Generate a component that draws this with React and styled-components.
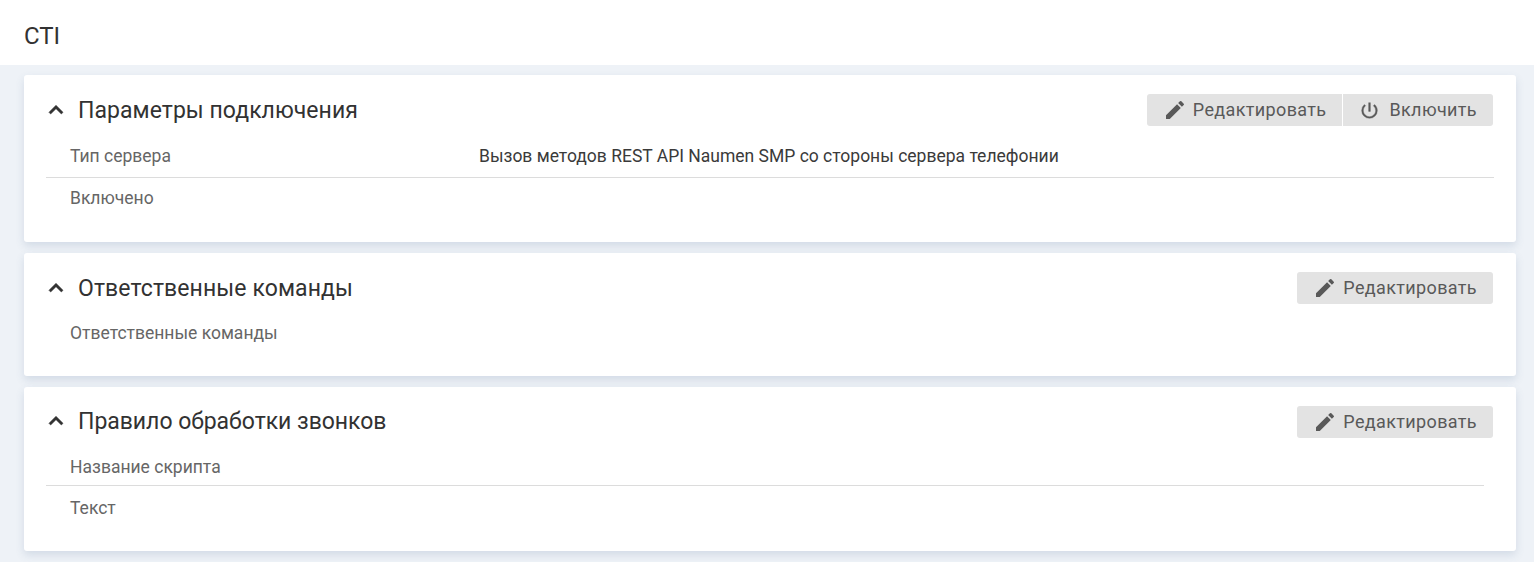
import React from "react";
import styled, { createGlobalStyle } from "styled-components";

const Global = createGlobalStyle`
  html, body { margin: 0; padding: 0; background: #eef2f7; }
  body { font-family: Roboto, "Noto Sans", sans-serif; height: 562px; overflow: hidden; }
`;
const Header = styled.header`
  height: 65px; box-sizing: border-box; background: #fff; padding: 6px 24px 0; display: flex; align-items: center;
  font-size: 24px; color: #323232;
`;
const Content = styled.main`
  padding: 10px 18px 0 24px; display: flex; flex-direction: column; gap: 11px;
`;
const Card = styled.section`
  background: #fff; border-radius: 3px; height: ${p => p.$h}px; box-sizing: border-box;
  padding: 19px 23px 0 22px; box-shadow: 0 4px 8px rgba(68, 98, 140, 0.16);
`;
const CardHead = styled.div`
  display: flex; align-items: center; height: 32px; margin-bottom: ${p => p.$mb}px;
`;
const TitleGroup = styled.div`
  display: flex; align-items: center; flex: 1; margin-bottom: ${p => p.$lift || 0}px;
`;
const Chevron = styled.svg`
  width: 28px; height: 28px; fill: #323232; stroke: #323232; stroke-width: 0.5; margin: 0 8px 0 -4px; flex: none;
`;
const CardTitle = styled.h2`
  margin: 0; font-size: 23px; font-weight: 400; color: #323232; letter-spacing: ${p => p.$ls}px;
`;
const BtnGroup = styled.div`
  display: flex; gap: 1px;
`;
const Btn = styled.button`
  all: unset; height: 32.5px; box-sizing: border-box; display: flex; align-items: center; gap: 6px;
  background: #e3e3e3; padding: 0 16px; font-size: 18px; font-weight: 400;
  color: #595959; letter-spacing: 0.36px; font-family: inherit;
  &:first-child { border-radius: 3px 0 0 3px; }
  &:last-child { border-radius: 0 3px 3px 0; }
  &:only-child { border-radius: 3px; }
`;
const BtnLabel = styled.span`
  padding-bottom: 2px;
`;
const BtnIcon = styled.svg`
  width: 24px; height: 24px; fill: #595959; flex: none;
`;
const PowerIcon = styled(BtnIcon)`
  width: 21px; height: 21px; margin: 0 3px 0 0; stroke: #595959; stroke-width: 0.4;
`;
const Row = styled.div`
  display: flex; align-items: center; height: ${p => p.$h || 41}px;
  padding: ${p => p.$pt || 0}px 0 ${p => p.$pb ?? 2}px 24px;
  margin-right: ${p => p.$mr ?? -1}px;
  font-size: 17.5px; color: #3a3a3a; box-sizing: border-box;
  border-bottom: ${p => (p.$line ? "1px solid #dcdcdc" : "none")};
`;
const Label = styled.div`
  width: 409px; flex: none; color: #666;
`;

const Up = () => <Chevron viewBox="0 0 24 24"><path d="M12 8l-6 6 1.41 1.41L12 10.83l4.59 4.58L18 14z" /></Chevron>;
const Pencil = () => <BtnIcon viewBox="0 0 24 24"><path d="M3 17.25V21h3.75L17.81 9.94l-3.75-3.75L3 17.25zM20.71 7.04a1 1 0 0 0 0-1.41l-2.34-2.34a1 1 0 0 0-1.41 0l-1.83 1.83 3.75 3.75 1.83-1.83z" /></BtnIcon>;
const Power = () => <PowerIcon viewBox="0 0 24 24"><path d="M13 3h-2v10h2V3zm4.83 2.17l-1.42 1.42A6.92 6.92 0 0 1 19 12c0 3.87-3.13 7-7 7s-7-3.13-7-7c0-2.17.99-4.1 2.58-5.42L6.17 5.17A8.932 8.932 0 0 0 3 12a9 9 0 0 0 18 0c0-2.74-1.23-5.19-3.17-6.83z" /></PowerIcon>;

export default function App() {
  return (
    <>
      <Global />
      <Header>CTI</Header>
      <Content>
        <Card $h={167}>
          <CardHead $mb={11}>
            <TitleGroup><Up /><CardTitle $ls={0.05}>Параметры подключения</CardTitle></TitleGroup>
            <BtnGroup>
              <Btn><Pencil /><BtnLabel>Редактировать</BtnLabel></Btn>
              <Btn><Power /><BtnLabel>Включить</BtnLabel></Btn>
            </BtnGroup>
          </CardHead>
          <Row $line><Label>Тип сервера</Label>Вызов методов REST API Naumen SMP со стороны сервера телефонии</Row>
          <Row><Label>Включено</Label></Row>
        </Card>
        <Card $h={123}>
          <CardHead $mb={9}>
            <TitleGroup><Up /><CardTitle $ls={0.1}>Ответственные команды</CardTitle></TitleGroup>
            <BtnGroup><Btn><Pencil /><BtnLabel>Редактировать</BtnLabel></Btn></BtnGroup>
          </CardHead>
          <Row><Label>Ответственные команды</Label></Row>
        </Card>
        <Card $h={164}>
          <CardHead $mb={9}>
            <TitleGroup $lift={2}><Up /><CardTitle $ls={-0.03}>Правило обработки звонков</CardTitle></TitleGroup>
            <BtnGroup><Btn><Pencil /><BtnLabel>Редактировать</BtnLabel></Btn></BtnGroup>
          </CardHead>
          <Row $line $mr={9} $h={39} $pt={2} $pb={0}><Label>Название скрипта</Label></Row>
          <Row $h={45}><Label>Текст</Label></Row>
        </Card>
      </Content>
    </>
  );
}
